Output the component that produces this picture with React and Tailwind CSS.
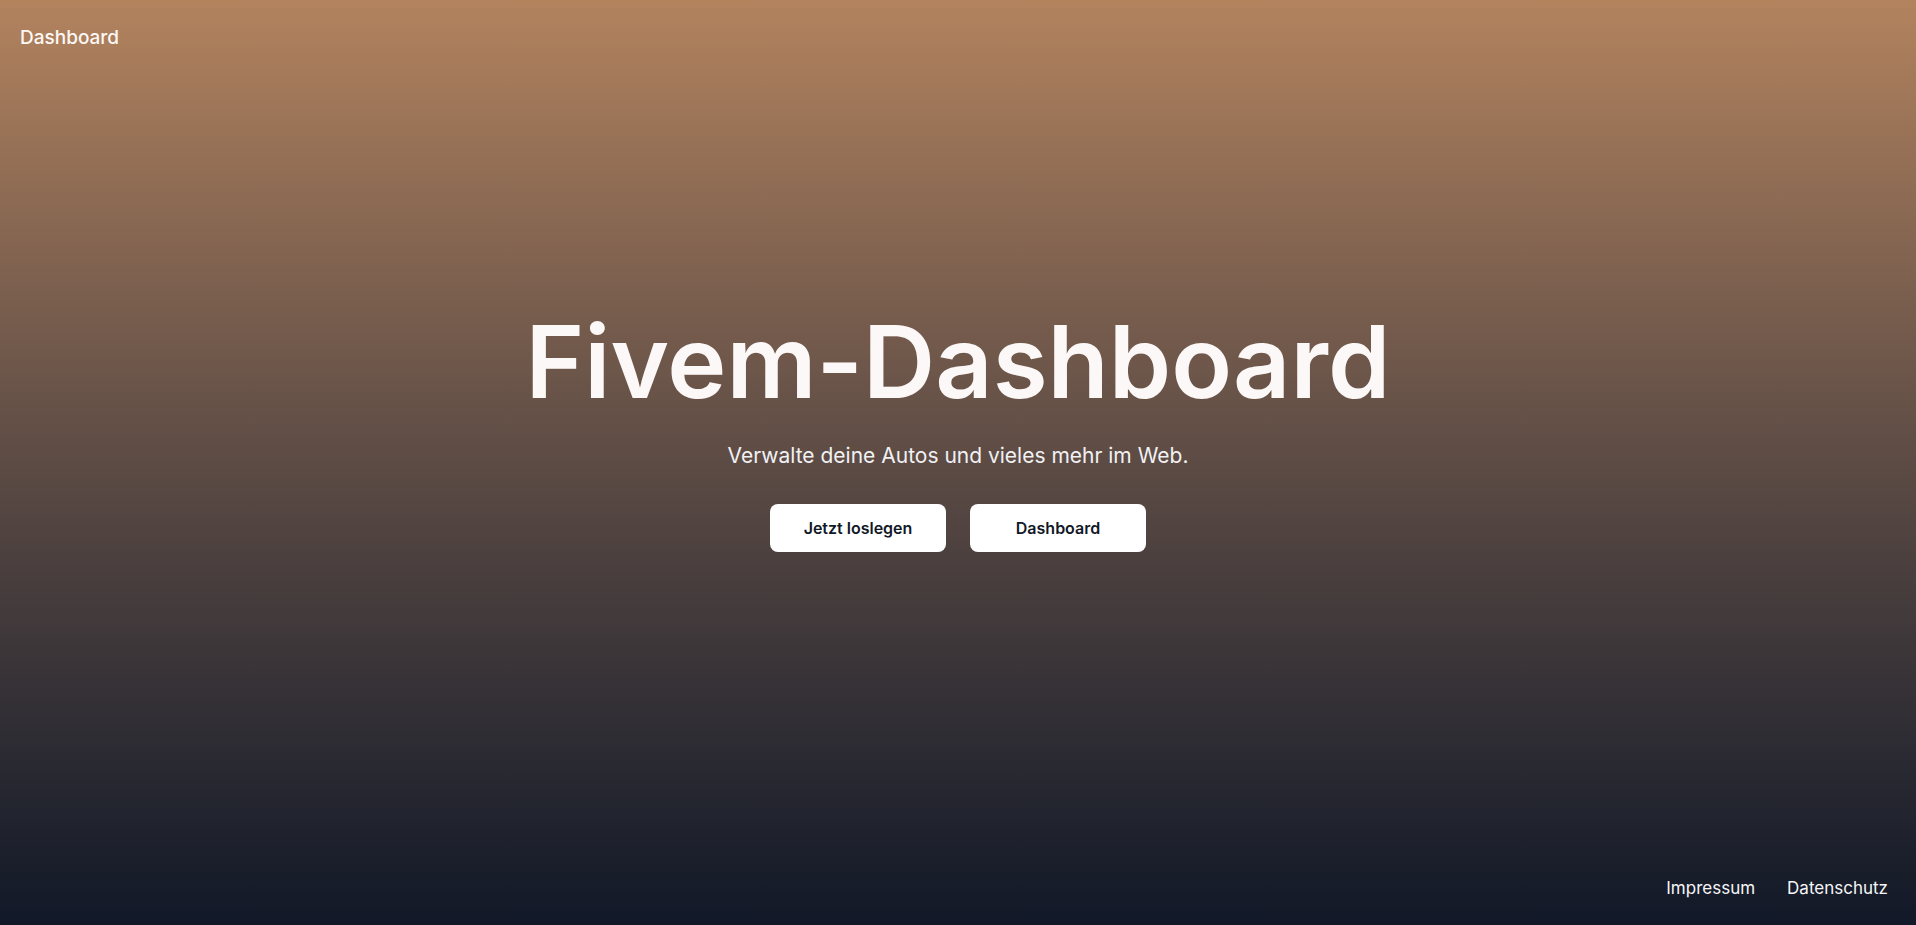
export default function App() {
  return (
    <div className="min-h-screen flex flex-col bg-linear-to-b from-[#b3835e] to-[#111827] text-white font-['Inter',sans-serif]">
      <header className="px-5 pt-6">
        <a href="#" className="text-[19px] font-medium text-[#fdf8f6]">
          Dashboard
        </a>
      </header>

      <main className="flex-1 flex flex-col items-center justify-center pb-16 text-center">
        <h1 className="text-[100px] font-semibold leading-none text-[#fcf8f7]">
          Fivem-Dashboard
        </h1>
        <p className="mt-7 text-[21px] text-[#f1f1f4]">
          Verwalte deine Autos und vieles mehr im Web.
        </p>
        <div className="mt-8 flex gap-6">
          <button className="w-44 py-3 rounded-lg bg-white text-[#111827] font-semibold">
            Jetzt loslegen
          </button>
          <button className="w-44 py-3 rounded-lg bg-white text-[#111827] font-semibold">
            Dashboard
          </button>
        </div>
      </main>

      <footer className="flex justify-end gap-8 px-7 pb-6 text-[17px] text-[#f5f5f7]">
        <a href="#">Impressum</a>
        <a href="#">Datenschutz</a>
      </footer>
    </div>
  );
}
